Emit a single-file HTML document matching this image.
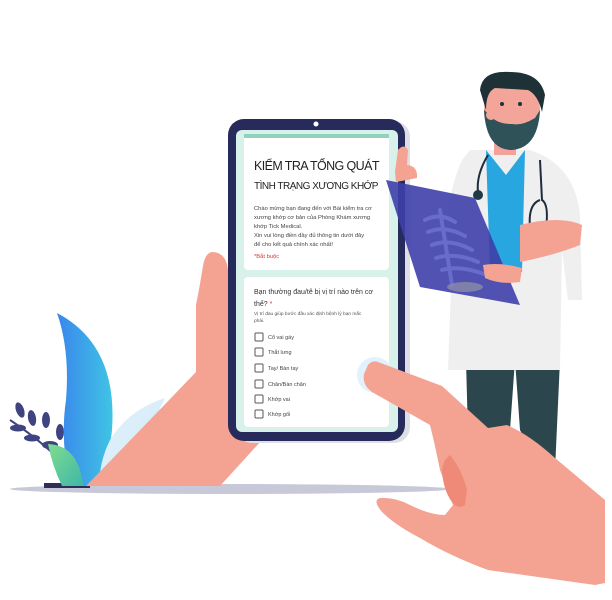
<!DOCTYPE html>
<html><head><meta charset="utf-8"><style>
html,body{margin:0;padding:0;background:#fff;width:612px;height:600px;overflow:hidden}
svg{display:block}
text{font-family:"Liberation Sans","DejaVu Sans",sans-serif}
</style></head><body>
<svg width="612" height="600" viewBox="0 0 612 600" xmlns="http://www.w3.org/2000/svg">
<defs>
<linearGradient id="lb" x1="0" y1="0" x2="1" y2="0"><stop offset="0" stop-color="#3a86ec"/><stop offset="1" stop-color="#3fc4e4"/></linearGradient>
<linearGradient id="lw" x1="0" y1="0" x2="1" y2="1"><stop offset="0" stop-color="#e4f2fb"/><stop offset="1" stop-color="#cfe8f6"/></linearGradient>
<linearGradient id="lg" x1="0" y1="0" x2="1" y2="1"><stop offset="0" stop-color="#7fdc8e"/><stop offset="1" stop-color="#3db7a8"/></linearGradient>
</defs>
<!-- ground -->
<ellipse cx="230" cy="489" rx="220" ry="5" fill="#c7c9d9"/>
<rect x="44" y="483" width="46" height="5" fill="#2b2f5a"/>
<!-- purple branch -->
<g fill="#3f4480">
<path d="M10 420 Q40 440 62 462" stroke="#3f4480" stroke-width="2" fill="none"/>
<ellipse cx="20" cy="410" rx="4" ry="8" transform="rotate(-20 20 410)"/>
<ellipse cx="32" cy="418" rx="4" ry="8" transform="rotate(-10 32 418)"/>
<ellipse cx="18" cy="428" rx="8" ry="3.5"/>
<ellipse cx="46" cy="420" rx="4" ry="8"/>
<ellipse cx="32" cy="438" rx="8" ry="3.5"/>
<ellipse cx="50" cy="445" rx="8" ry="4"/>
<ellipse cx="60" cy="432" rx="4" ry="8"/>
</g>
<!-- leaves -->
<path d="M57 313 Q118 345 112 430 Q108 470 92 486 L70 486 Q60 440 66 400 Q70 350 57 313Z" fill="url(#lb)"/>
<path d="M165 398 Q128 410 110 440 Q98 465 100 486 L120 486 Q140 450 165 398Z" fill="url(#lw)"/>
<path d="M48 444 Q72 445 80 470 L84 486 L62 486 Q52 465 48 444Z" fill="url(#lg)"/>
<!-- left hand -->
<path d="M212 252 Q226 252 228 270 L230 330 L262 440 L220 486 L86 486 Q150 420 196 372 L196 305 Q200 285 203 266 Q205 253 212 252Z" fill="#f4a292"/>
<!-- phone -->
<rect x="236" y="121" width="174" height="322" rx="16" fill="#dedfe4"/>
<rect x="228" y="119" width="177" height="322" rx="16" fill="#272b5c"/>
<circle cx="316" cy="124" r="2.5" fill="#fff"/>
<rect x="236" y="130" width="162" height="302" rx="6" fill="#d8f1ea"/>
<rect x="244" y="134" width="145" height="136" rx="4" fill="#fff"/>
<rect x="244" y="134" width="145" height="4" fill="#8fd3bb"/>
<rect x="244" y="277" width="145" height="150" rx="4" fill="#fff"/>
<text x="254" y="170" font-size="12.5" fill="#222" letter-spacing="-0.6">KIỂM TRA TỔNG QUÁT</text>
<text x="254" y="189" font-size="10" fill="#222" letter-spacing="-0.5">TÌNH TRẠNG XƯƠNG KHỚP</text>
<g font-size="5.8" fill="#444">
<text x="254" y="210">Chào mừng bạn đang đến với Bài kiểm tra cơ</text>
<text x="254" y="219">xương khớp cơ bản của Phòng Khám xương</text>
<text x="254" y="228">khớp Tick Medical.</text>
<text x="254" y="237">Xin vui lòng điền đầy đủ thông tin dưới đây</text>
<text x="254" y="246">để cho kết quả chính xác nhất!</text>
</g>
<text x="254" y="258" font-size="5.8" fill="#d33">*Bắt buộc</text>
<text x="254" y="294" font-size="7" fill="#333">Bạn thường đau/tê bị vị trí nào trên cơ</text>
<text x="254" y="306" font-size="7" fill="#333">thể? <tspan fill="#d33">*</tspan></text>
<text x="254" y="315" font-size="4.8" fill="#555">Vị trí đau giúp bước đầu xác định bệnh lý bạn mắc</text>
<text x="254" y="322" font-size="4.8" fill="#555">phải.</text>
<g fill="none" stroke="#555" stroke-width="1">
<rect x="255" y="333" width="8" height="8" rx="1"/><rect x="255" y="348" width="8" height="8" rx="1"/>
<rect x="255" y="364" width="8" height="8" rx="1"/><rect x="255" y="380" width="8" height="8" rx="1"/>
<rect x="255" y="395" width="8" height="8" rx="1"/><rect x="255" y="410" width="8" height="8" rx="1"/>
</g>
<g font-size="5.5" fill="#444">
<text x="268" y="339">Cổ vai gáy</text><text x="268" y="354">Thắt lưng</text>
<text x="268" y="370">Tay/ Bàn tay</text><text x="268" y="386">Chân/Bàn chân</text>
<text x="268" y="401">Khớp vai</text><text x="268" y="416">Khớp gối</text>
</g>
<!-- touch -->
<circle cx="375" cy="375" r="18" fill="#e2f1fb"/>
<circle cx="375" cy="378" r="10" fill="#a9d9f3"/>
<!-- doctor legs -->
<path d="M466 360 L515 360 L510 430 L500 430 L497 510 L470 510Z" fill="#2c464d"/>
<path d="M515 360 L560 360 L555 470 L540 470 L520 430Z" fill="#2c464d"/>
<path d="M458 500 L470 500 L466 518 L448 518Z" fill="#2c464d"/>
<!-- coat -->
<path d="M470 150 L530 150 Q575 165 580 215 L582 300 L568 300 L562 250 L560 370 L448 370 L452 260 Q440 210 462 160Z" fill="#efefef"/>
<path d="M486 150 L525 150 L522 272 L490 272Z" fill="#27a6e0"/>
<path d="M486 150 L506 175 L525 150Z" fill="#efefef"/>
<!-- stethoscope -->
<path d="M488 155 Q476 175 478 192" stroke="#1f2d3f" stroke-width="2" fill="none"/>
<circle cx="478" cy="195" r="5" fill="#1f3a45"/>
<path d="M540 160 L542 200 Q550 205 545 235 Q538 245 531 235 Q526 205 540 200" stroke="#1f2d3f" stroke-width="2" fill="none"/>
<!-- neck/head -->
<rect x="494" y="135" width="22" height="20" fill="#f2a29a"/>
<ellipse cx="512" cy="110" rx="28" ry="34" fill="#f4a59a"/>
<path d="M484 110 Q486 150 512 150 Q538 148 540 110 L535 118 Q522 126 512 124 Q496 124 490 115Z" fill="#2f5158"/>
<path d="M480 90 Q482 70 510 72 Q540 72 545 95 L542 112 Q538 95 528 90 L495 88 Q486 92 486 110 Z" fill="#1d3136"/>
<circle cx="491" cy="115" r="5" fill="#f4a59a"/>
<circle cx="502" cy="104" r="2" fill="#1d3136"/><circle cx="520" cy="104" r="2" fill="#1d3136"/>
<!-- arm -->
<path d="M520 225 Q560 215 582 225 L580 245 Q555 255 520 262Z" fill="#f4a292"/>
<!-- xray -->
<path d="M386 180 L475 198 L520 305 L420 287Z" fill="#3e3fa8" opacity="0.9"/>
<g stroke="#6b6fd0" stroke-width="4" fill="none" stroke-linecap="round" opacity="0.9">
<path d="M425 220 Q440 212 455 222"/><path d="M428 232 Q445 225 465 236"/><path d="M432 245 Q450 238 472 250"/><path d="M436 258 Q455 252 478 262"/><path d="M442 270 Q460 265 484 274"/>
<path d="M440 210 L452 285"/>
</g>
<ellipse cx="465" cy="287" rx="18" ry="5" fill="#8a8ca8" opacity="0.8"/>
<!-- doctor hand holding -->
<path d="M483 265 Q500 262 522 268 L520 282 Q500 285 485 278Z" fill="#f4a292"/>
<!-- thumb -->
<path d="M395 172 L398 150 Q404 143 408 150 L407 165 Q418 166 417 178 L396 182Z" fill="#f4a292"/>
<!-- right hand -->
<path d="M368 365 Q372 360 378 362 L442 386 L488 428 L507 425 Q530 435 555 458 L605 500 L605 583 L595 585 L488 570 Q450 556 420 538 Q395 525 382 512 Q372 500 380 498 Q395 497 410 505 Q430 515 445 515 L453 505 L440 470 Q435 445 430 425 L372 392 Q362 385 364 374Z" fill="#f4a292"/>
<path d="M450 455 Q462 470 467 490 L465 505 Q458 510 452 502 Q443 490 442 470 Q443 460 450 455Z" fill="#ef8a78"/>
</svg>
</body></html>
